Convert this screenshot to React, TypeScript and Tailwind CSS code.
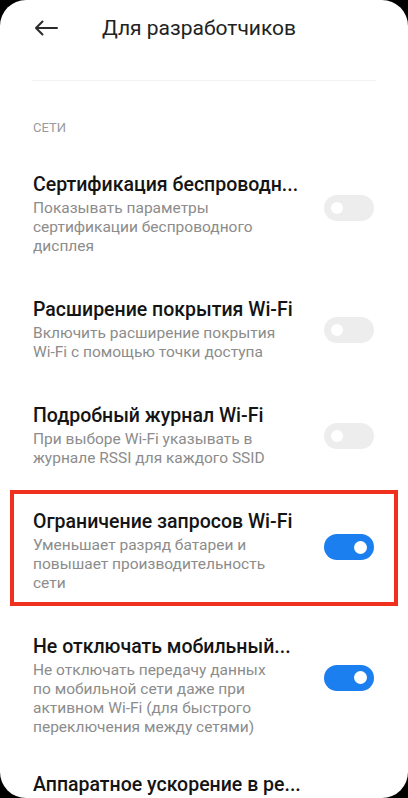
import React from "react";

type Item = { title: string; sub: string[]; on: boolean | null; tg: string; pt: string };

const items: Item[] = [
  {
    title: "Сертификация беспроводн...",
    sub: ["Показывать параметры", "сертификации беспроводного", "дисплея"],
    on: false,
    tg: "mb-[12px]",
    pt: "pt-[20px]",
  },
  {
    title: "Расширение покрытия Wi-Fi",
    sub: ["Включить расширение покрытия", "Wi-Fi с помощью точки доступа"],
    on: false,
    tg: "mb-0",
    pt: "pt-[20px]",
  },
  {
    title: "Подробный журнал Wi-Fi",
    sub: ["При выборе Wi-Fi указывать в", "журнале RSSI для каждого SSID"],
    on: false,
    tg: "mb-0",
    pt: "pt-[20px]",
  },
  {
    title: "Ограничение запросов Wi-Fi",
    sub: ["Уменьшает разряд батареи и", "повышает производительность", "сети"],
    on: true,
    tg: "mb-[8px]",
    pt: "pt-[20px]",
  },
  {
    title: "Не отключать мобильный...",
    sub: [
      "Не отключать передачу данных",
      "по мобильной сети даже при",
      "активном Wi-Fi (для быстрого",
      "переключения между сетями)",
    ],
    on: true,
    tg: "mb-[16px]",
    pt: "pt-[20px]",
  },
  {
    title: "Аппаратное ускорение в ре...",
    sub: [],
    on: null,
    tg: "mb-0",
    pt: "pt-[14px]",
  },
];

function Toggle({ on }: { on: boolean }) {
  return on ? (
    <div className="w-[50px] h-[26px] rounded-full bg-[#1b7ff0] flex items-center justify-end pr-[7px] shrink-0">
      <div className="w-[13px] h-[13px] rounded-full bg-white" />
    </div>
  ) : (
    <div className="w-[50px] h-[26px] rounded-full bg-[#ededed] flex items-center pl-[7px] shrink-0">
      <div className="w-[12px] h-[12px] rounded-full bg-white" />
    </div>
  );
}

function Row({ item, highlight }: { item: Item; highlight?: boolean }) {
  return (
    <div className={"relative flex items-center pl-[33px] pr-[34px] pb-[21px] " + item.pt}>
      {highlight && (
        <div className="absolute left-[10px] right-[10px] top-[1px] bottom-[8px] border-[4px] border-[#f0301c] pointer-events-none" />
      )}
      <div className="flex-1 min-w-0">
        <div className="text-[19.5px] leading-[25px] font-medium text-[#141414] whitespace-nowrap">
          {item.title}
        </div>
        {item.sub.length > 0 && (
          <div className="mt-[2px] text-[15.5px] leading-[19px] text-[#8c8c8c]">
            {item.sub.map((s, i) => (
              <div key={i} className="whitespace-nowrap">
                {s}
              </div>
            ))}
          </div>
        )}
      </div>
      {item.on !== null && (
        <div className={"ml-[12px] " + item.tg}>
          <Toggle on={item.on} />
        </div>
      )}
    </div>
  );
}

export default function App() {
  return (
    <div className="w-[408px] h-[798px] bg-black overflow-hidden" style={{ fontFamily: "Roboto, 'Noto Sans', sans-serif" }}>
      <div className="w-full h-full bg-white rounded-[26px] overflow-hidden">
        <div className="h-[56px] flex items-center pl-[34px]">
          <svg width="24" height="16" viewBox="0 0 24 16" fill="none" className="shrink-0">
            <path d="M23 8H2M8.5 1.5L2 8l6.5 6.5" stroke="#2b2b2b" strokeWidth="2" strokeLinecap="round" strokeLinejoin="round" />
          </svg>
          <div className="ml-[44px] text-[21px] leading-[26px] text-[#222]">Для разработчиков</div>
        </div>
        <div className="mt-[24px] mx-[32px] h-px bg-[#f2f2f2]" />
        <div className="pt-[39px] pl-[33px] text-[13px] leading-[16px] text-[#9a9a9a]">СЕТИ</div>
        <div className="mt-[16px]">
          {items.map((it, i) => (
            <Row key={i} item={it} highlight={i === 3} />
          ))}
        </div>
      </div>
    </div>
  );
}
